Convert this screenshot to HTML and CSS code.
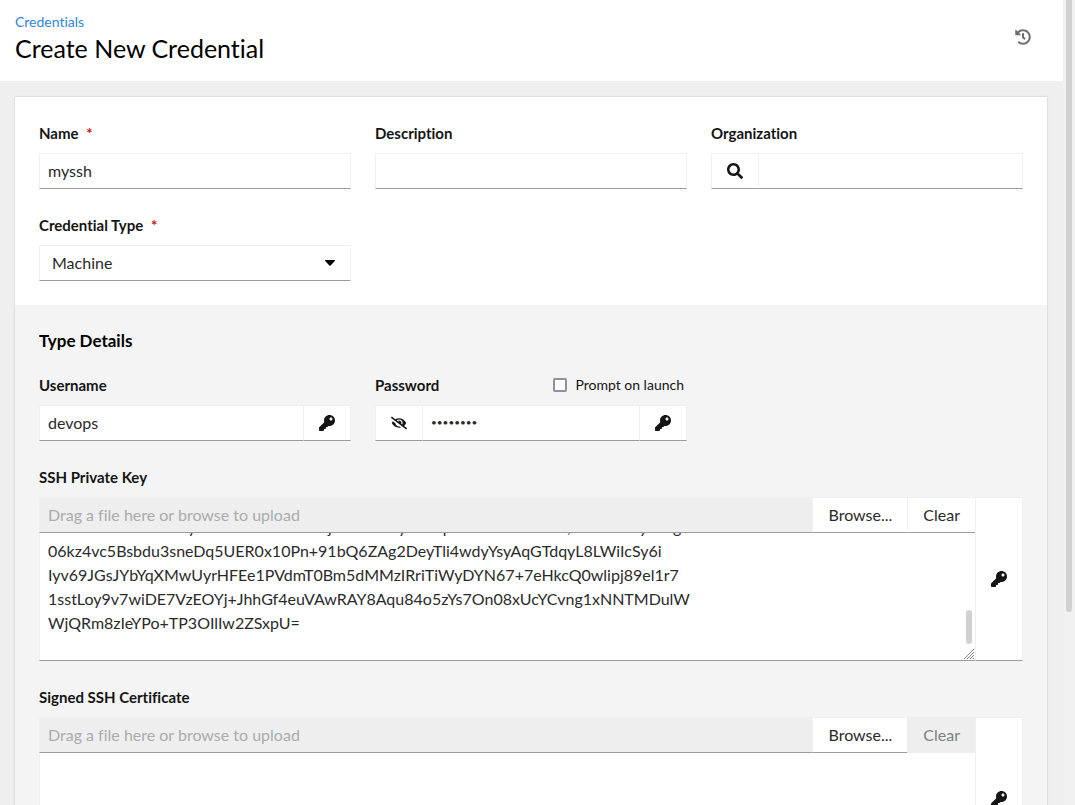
FILE: index.html
```html
<!DOCTYPE html>
<html lang="en">
<head>
    <meta charset="UTF-8">
    <meta name="viewport" content="width=device-width, initial-scale=1.0">
    <title>Create New Credential</title>
    <link rel="stylesheet" href="styles.css">
</head>
<body>
    <!-- shared icons -->
    <svg class="icon-defs" aria-hidden="true">
        <symbol id="icon-key" viewBox="0 0 512 512"><path d="M512 176.001C512 273.203 433.202 352 336 352c-11.22 0-22.19-1.062-32.827-3.069l-24.012 27.014A23.999 23.999 0 0 1 261.223 384H224v40c0 13.255-10.745 24-24 24h-40v40c0 13.255-10.745 24-24 24H24c-13.255 0-24-10.745-24-24v-78.059c0-6.365 2.529-12.47 7.029-16.971l161.802-161.802C163.108 213.814 160 195.271 160 176 160 78.798 238.797.001 335.999 0 433.488-.001 512 78.511 512 176.001zM336 128c0 26.51 21.49 48 48 48s48-21.49 48-48-21.49-48-48-48-48 21.49-48 48z"/></symbol>
        <symbol id="icon-search" viewBox="0 0 512 512"><path d="M505 442.7L405.3 343c-4.5-4.5-10.6-7-17-7H372c27.6-35.3 44-79.7 44-128C416 93.1 322.9 0 208 0S0 93.1 0 208s93.1 208 208 208c48.3 0 92.7-16.4 128-44v16.3c0 6.4 2.5 12.5 7 17l99.7 99.7c9.4 9.4 24.6 9.4 33.9 0l28.3-28.3c9.4-9.4 9.4-24.6.1-34zM208 336c-70.7 0-128-57.2-128-128 0-70.7 57.2-128 128-128 70.7 0 128 57.2 128 128 0 70.7-57.2 128-128 128z"/></symbol>
        <symbol id="icon-history" viewBox="0 0 512 512"><path d="M504 255.531c.253 136.64-111.18 248.372-247.82 248.468-59.015.042-113.223-20.53-155.822-54.911-11.077-8.94-11.905-25.541-1.839-35.607l11.267-11.267c8.609-8.609 22.353-9.551 31.891-1.984C173.062 425.135 212.781 440 256 440c101.705 0 184-82.311 184-184 0-101.705-82.311-184-184-184-48.814 0-93.149 18.969-126.068 49.932l50.754 50.754c10.08 10.08 2.941 27.314-11.313 27.314H24c-8.837 0-16-7.163-16-16V38.627c0-14.254 17.234-21.393 27.314-11.314l49.372 49.372C129.209 34.136 189.552 8 256 8c136.81 0 247.747 110.78 248 247.531zm-180.912 78.784l9.823-12.63c8.138-10.463 6.253-25.542-4.21-33.679L288 256.349V152c0-13.255-10.745-24-24-24h-16c-13.255 0-24 10.745-24 24v135.651l65.409 50.874c10.463 8.137 25.541 6.253 33.679-4.21z"/></symbol>
        <symbol id="icon-eye-slash" viewBox="0 0 640 512"><path d="M320 400c-75.85 0-137.25-58.71-142.9-133.11L72.2 185.82c-13.79 17.3-26.48 35.59-36.72 55.59a32.35 32.35 0 0 0 0 29.19C89.71 376.41 197.07 448 320 448c26.91 0 52.87-4 77.89-10.46L346 397.39a144.13 144.13 0 0 1-26 2.61zm313.82 58.1l-110.55-85.44a331.25 331.25 0 0 0 81.25-102.07 32.35 32.35 0 0 0 0-29.19C550.29 135.59 442.93 64 320 64a308.15 308.15 0 0 0-147.32 37.7L45.46 3.37A16 16 0 0 0 23 6.18L3.37 31.45A16 16 0 0 0 6.18 53.9l588.36 454.73a16 16 0 0 0 22.46-2.81l19.64-25.27a16 16 0 0 0-2.82-22.45zm-183.72-142l-39.3-30.38A94.75 94.75 0 0 0 416 256a94.76 94.76 0 0 0-121.31-92.21A47.65 47.65 0 0 1 304 192a46.64 46.64 0 0 1-1.54 10l-73.61-56.89A142.31 142.31 0 0 1 320 112a143.92 143.92 0 0 1 144 144c0 21.63-5.29 41.79-13.9 60.11z"/></symbol>
    </svg>

    <div class="page">
        <header class="page-header">
            <div>
                <nav class="breadcrumb"><a href="#">Credentials</a></nav>
                <h1>Create New Credential</h1>
            </div>
            <button type="button" class="history" aria-label="View activity stream"><svg class="icon"><use href="#icon-history"/></svg></button>
        </header>

        <main>
            <form class="card">
                <div class="section">
                    <div class="field">
                        <div class="field-label"><label for="name">Name <span class="required">*</span></label></div>
                        <input type="text" id="name" value="myssh">
                    </div>
                    <div class="field">
                        <div class="field-label"><label for="description">Description</label></div>
                        <input type="text" id="description">
                    </div>
                    <div class="field">
                        <div class="field-label"><label for="organization">Organization</label></div>
                        <div class="input-group">
                            <button type="button" class="control" aria-label="Search"><svg class="icon"><use href="#icon-search"/></svg></button>
                            <input type="text" id="organization">
                        </div>
                    </div>
                    <div class="field">
                        <div class="field-label"><label for="type">Credential Type <span class="required">*</span></label></div>
                        <div class="select-wrap">
                            <select id="type"><option>Machine</option></select>
                            <svg class="caret" viewBox="0 0 10 6"><path d="M.6 0h8.8c.6 0 .8.6.4 1L5.6 5.4c-.3.4-.9.4-1.200 0L.2 1C-.2.6 0 0 .6 0z"/></svg>
                        </div>
                    </div>
                </div>

                <!-- Type Details -->
                <div class="section details">
                    <h2>Type Details</h2>
                    <div class="field">
                        <div class="field-label"><label for="username">Username</label></div>
                        <div class="input-group">
                            <input type="text" id="username" value="devops">
                            <button type="button" class="control" aria-label="Use external secret"><svg class="icon"><use href="#icon-key"/></svg></button>
                        </div>
                    </div>
                    <div class="field">
                        <div class="field-label">
                            <label for="password">Password</label>
                            <span class="prompt"><input type="checkbox" id="prompt"><label for="prompt">Prompt on launch</label></span>
                        </div>
                        <div class="input-group">
                            <button type="button" class="control" aria-label="Show password"><svg class="icon"><use href="#icon-eye-slash"/></svg></button>
                            <input type="password" id="password" value="password">
                            <button type="button" class="control" aria-label="Use external secret"><svg class="icon"><use href="#icon-key"/></svg></button>
                        </div>
                    </div>

                    <div class="field full">
                        <div class="field-label"><label for="ssh-key">SSH Private Key</label></div>
                        <div class="input-group">
                            <div class="upload">
                                <div class="input-group">
                                    <input type="text" class="filename" placeholder="Drag a file here or browse to upload" aria-label="SSH private key file" readonly>
                                    <button type="button" class="control text">Browse...</button>
                                    <button type="button" class="control text">Clear</button>
                                </div>
                                <div class="textarea-wrap">
                                    <textarea id="ssh-key" spellcheck="false" wrap="off">
nTkRsaVd4xHe2mzfyLbE8uK3cFw5Nohj6v1MXt7yhRv4pUs9eBkW2x6Rn,Tz3uKe8hyW2g
06kz4vc5Bsbdu3sneDq5UER0x10Pn+91bQ6ZAg2DeyTli4wdyYsyAqGTdqyL8LWiIcSy6i
Iyv69JGsJYbYqXMwUyrHFEe1PVdmT0Bm5dMMzIRriTiWyDYN67+7eHkcQ0wlipj89el1r7
1sstLoy9v7wiDE7VzEOYj+JhhGf4euVAwRAY8Aqu84o5zYs7On08xUcYCvng1xNNTMDulW
WjQRm8zIeYPo+TP3OIlIw2ZSxpU=
</textarea>
                                    <span class="thumb"></span>
                                    <svg class="grip" viewBox="0 0 10 10"><path d="M0 10L10 0M3 10l7-7M6 10l4-4M9 10l1-1"/></svg>
                                </div>
                            </div>
                            <button type="button" class="control" aria-label="Use external secret"><svg class="icon"><use href="#icon-key"/></svg></button>
                        </div>
                    </div>

                    <div class="field full">
                        <div class="field-label"><label for="ssh-cert">Signed SSH Certificate</label></div>
                        <div class="input-group">
                            <div class="upload">
                                <div class="input-group">
                                    <input type="text" class="filename" placeholder="Drag a file here or browse to upload" aria-label="Signed SSH certificate file" readonly>
                                    <button type="button" class="control text">Browse...</button>
                                    <button type="button" class="control text" disabled>Clear</button>
                                </div>
                                <div class="textarea-wrap">
                                    <textarea id="ssh-cert"></textarea>
                                </div>
                            </div>
                            <button type="button" class="control" aria-label="Use external secret"><svg class="icon"><use href="#icon-key"/></svg></button>
                        </div>
                    </div>
                </div>
            </form>
        </main>
    </div>
    <div class="scrollbar"><span></span></div>

    <script>
        // keep the end of the key in view
        const key = document.getElementById("ssh-key");
        key.scrollTop = key.scrollHeight;
    </script>
</body>
</html>
```
FILE: styles.css
```css
* {
    box-sizing: border-box;
}
body {
    margin: 0;
    height: 100vh;
    overflow: hidden;
    display: flex;
    background-color: #efefef;
    color: #151515;
    font-family: Lato, "Liberation Sans", sans-serif;
    font-size: 16px;
    line-height: 24px;
    font-variant-ligatures: none;
}
input,
select,
textarea,
button {
    margin: 0;
    font: inherit;
    font-variant-ligatures: none;
    color: inherit;
    border-radius: 0;
}
.icon-defs {
    display: none;
}
.icon {
    display: block;
    width: 16px;
    height: 16px;
    fill: #151515;
}

/* page */
.page {
    flex: 1;
    min-width: 0;
}
.page-header {
    display: flex;
    justify-content: space-between;
    align-items: flex-start;
    background-color: #fff;
    padding: 11px 16px 17px 15px;
}
.breadcrumb {
    font-size: 14px;
    line-height: 21px;
}
.breadcrumb a {
    color: #2b87dc;
    text-decoration: none;
}
h1 {
    margin: 0;
    font-size: 25px;
    font-weight: 400;
    line-height: 32px;
    color: #000;
}
.history {
    border: 0;
    background: none;
    padding: 18px 16px;
}
.history .icon {
    fill: #6a6e73;
}
main {
    padding: 16px 16px 16px 15px;
}
.scrollbar {
    width: 12px;
    padding: 0 3px;
    background-color: #f1f1f1;
}
.scrollbar span {
    display: block;
    height: 76%;
    border-radius: 0 0 3px 3px;
    background-color: #d1d1d1;
}

/* form */
.card {
    background-color: #fff;
    box-shadow: 0 0 2px rgba(3, 3, 3, 0.2);
}
.section {
    display: grid;
    grid-template-columns: repeat(3, 1fr);
    gap: 24px;
    padding: 24px;
}
.details {
    background-color: #f4f4f4;
}
h2 {
    grid-column: 1 / -1;
    margin: 0 0 -4px;
    font-size: 17px;
    font-weight: 700;
    color: #000;
}
.full {
    grid-column: 1 / -1;
}
.field-label {
    display: flex;
    justify-content: space-between;
    height: 24px;
    margin-bottom: 8px;
    font-size: 15px;
    font-weight: 700;
}
.required {
    margin-left: 4px;
    color: #c9190b;
}
.prompt {
    display: flex;
    align-items: center;
    gap: 8px;
    padding-right: 3px;
    font-size: 14px;
    font-weight: 400;
}
.prompt input {
    appearance: none;
    width: 14px;
    height: 14px;
    border: 2px solid #8f8f9d;
    border-radius: 2px;
    background-color: #fff;
}

/* controls */
input[type="text"],
input[type="password"],
select,
textarea,
.control {
    display: block;
    width: 100%;
    height: 36px;
    border: 1px solid #f0f0f0;
    border-bottom-color: #9a9c9f;
    background-color: #fff;
    color: #2a2a2a;
    padding: 4px 8px 6px;
    outline: none;
}
.input-group {
    display: flex;
}
.input-group > input {
    flex: 1;
    min-width: 0;
}
.input-group > input[type="password"] {
    font-size: 10px;
}
.input-group > * + * {
    margin-left: -1px;
}
.input-group > .control {
    flex: none;
    width: 48px;
    height: auto;
    padding: 5px 15px;
}
.input-group > .control.text {
    width: auto;
}
.input-group > .control:disabled {
    background-color: #eee;
    border-color: #eee;
    color: #7d8084;
}
.select-wrap {
    position: relative;
}
select {
    appearance: none;
    padding: 5px 12px;
}
.caret {
    position: absolute;
    right: 16px;
    top: 15px;
    width: 10px;
    height: 6px;
}
.upload {
    flex: 1;
    min-width: 0;
}
.upload .filename {
    background-color: #eee;
}
.filename::placeholder {
    color: #aaabac;
    opacity: 1;
}
.textarea-wrap {
    position: relative;
}
textarea {
    height: 128px;
    border-top: 0;
    padding-bottom: 1px;
    resize: none;
    scrollbar-width: none;
}
.thumb {
    position: absolute;
    right: 4px;
    bottom: 17px;
    width: 6px;
    height: 34px;
    border-radius: 3px;
    background-color: #d1d1d1;
}
.grip {
    position: absolute;
    right: 2px;
    bottom: 2px;
    width: 10px;
    height: 10px;
    stroke: #8a8a8a;
}
```
